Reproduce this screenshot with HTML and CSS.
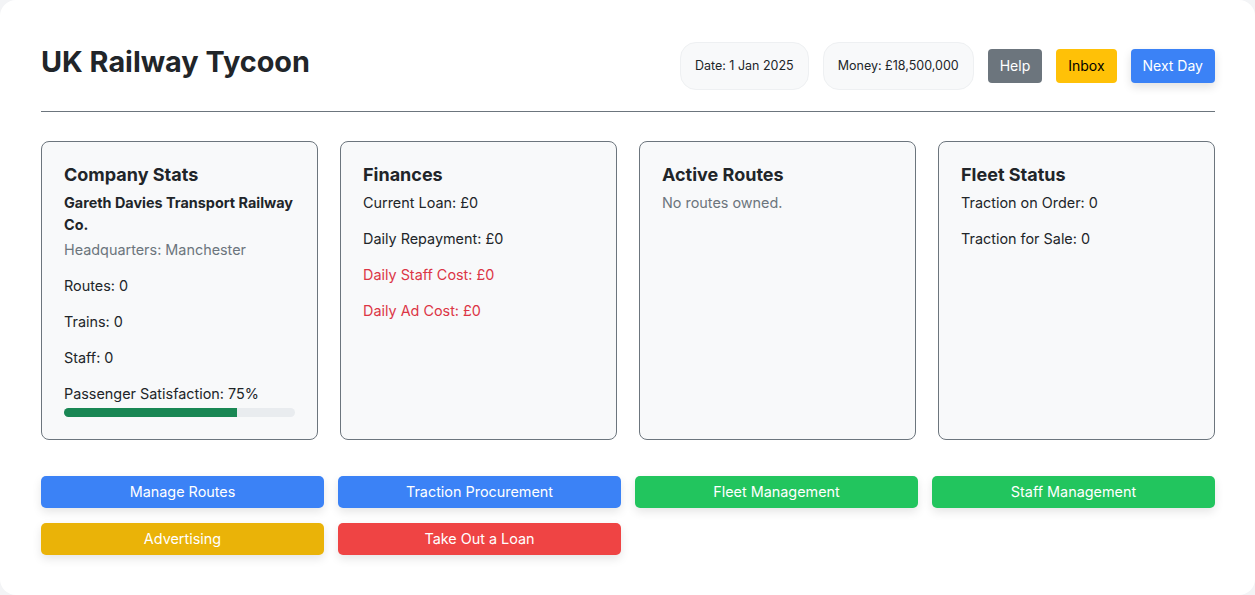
FILE: index.html
```html
<!DOCTYPE html>
<html lang="en">
<head>
  <meta charset="UTF-8" />
  <meta name="viewport" content="width=device-width, initial-scale=1.0"/>
  <title>UK Railway Tycoon</title>
  <link rel="stylesheet" href="styles.css">
</head>
<body>
  <div class="container">
    <div class="header">
      <h1>UK Railway Tycoon</h1>
      <div class="header-right">
        <div class="pill">Date: 1 Jan 2025</div>
        <div class="pill">Money: £18,500,000</div>
        <button class="btn btn-help">Help</button>
        <button class="btn btn-inbox">Inbox</button>
        <button class="btn btn-next">Next Day</button>
      </div>
    </div>

    <div class="cards">
      <div class="card">
        <h3>Company Stats</h3>
        <p class="company-name">Gareth Davies Transport Railway Co.</p>
        <p class="muted">Headquarters: Manchester</p>
        <p>Routes: 0</p>
        <p>Trains: 0</p>
        <p>Staff: 0</p>
        <p class="sat-label">Passenger Satisfaction: 75%</p>
        <div class="bar"><div class="bar-fill" style="width: 75%;"></div></div>
      </div>

      <div class="card">
        <h3>Finances</h3>
        <p>Current Loan: £0</p>
        <p>Daily Repayment: £0</p>
        <p class="danger">Daily Staff Cost: £0</p>
        <p class="danger">Daily Ad Cost: £0</p>
      </div>

      <div class="card">
        <h3>Active Routes</h3>
        <p class="muted">No routes owned.</p>
      </div>

      <div class="card">
        <h3>Fleet Status</h3>
        <p>Traction on Order: 0</p>
        <p>Traction for Sale: 0</p>
      </div>
    </div>

    <div class="actions">
      <button class="action blue">Manage Routes</button>
      <button class="action blue">Traction Procurement</button>
      <button class="action green">Fleet Management</button>
      <button class="action green">Staff Management</button>
      <button class="action yellow">Advertising</button>
      <button class="action red">Take Out a Loan</button>
    </div>
  </div>
</body>
</html>
```

FILE: styles.css
```css
body {
  font-family: Inter, "Noto Sans", sans-serif;
  margin: 0;
  background: #f3f4f6;
  color: #212529;
}

.container {
  background: #fff;
  border-radius: 16px;
  min-height: 595px;
  box-sizing: border-box;
  padding: 42px 40px 40px 41px;
}

.header {
  display: flex;
  justify-content: space-between;
  align-items: center;
  padding-bottom: 21px;
  border-bottom: 1px solid #6c757d;
  margin-bottom: 29px;
}

h1 {
  font-size: 28.8px;
  line-height: 34px;
  font-weight: 700;
  margin: 0 0 9px;
}

.header-right {
  display: flex;
  align-items: center;
  gap: 14px;
}

.pill {
  background: #f8f9fa;
  border: 1px solid #eef0f2;
  border-radius: 16px;
  padding: 14px 14px;
  font-size: 12.5px;
  line-height: 18px;
}

.btn {
  font-family: inherit;
  font-size: 14px;
  line-height: 22px;
  padding: 6px 12px;
  border: none;
  border-radius: 4px;
  cursor: pointer;
}

.btn-help {
  background: #6c757d;
  color: #fff;
}

.btn-inbox {
  background: #ffc107;
  color: #000;
}

.btn-next {
  background: #3b82f6;
  color: #fff;
  box-shadow: 0 4px 10px rgba(0, 0, 0, 0.12);
}

.cards {
  display: grid;
  grid-template-columns: repeat(4, 1fr);
  gap: 22px;
}

.card {
  background: #f8f9fa;
  border: 1px solid #6c757d;
  border-radius: 8px;
  padding: 22px;
}

.card h3 {
  font-size: 18px;
  line-height: 21px;
  font-weight: 700;
  margin: 0 0 7px;
}

.card p {
  font-size: 14.4px;
  line-height: 22px;
  margin: 0 0 14px;
}

.card p.company-name {
  font-weight: 700;
  margin-bottom: 3px;
}

.muted {
  color: #6c757d;
}

.danger {
  color: #dc3545;
}

.card p.sat-label {
  margin-bottom: 3px;
}

.bar {
  height: 9px;
  background: #e9ecef;
  border-radius: 5px;
  overflow: hidden;
}

.bar-fill {
  height: 100%;
  background: #198754;
}

.actions {
  display: grid;
  grid-template-columns: repeat(4, 1fr);
  gap: 15px 14px;
  margin-top: 36px;
}

.action {
  font-family: inherit;
  font-size: 14.4px;
  line-height: 20px;
  padding: 6px 10px;
  color: #fff;
  border: none;
  border-radius: 5px;
  box-shadow: 0 4px 10px rgba(0, 0, 0, 0.1);
  cursor: pointer;
}

.blue { background: #3b82f6; }
.green { background: #22c55e; }
.yellow { background: #eab308; }
.red { background: #ef4444; }
```
